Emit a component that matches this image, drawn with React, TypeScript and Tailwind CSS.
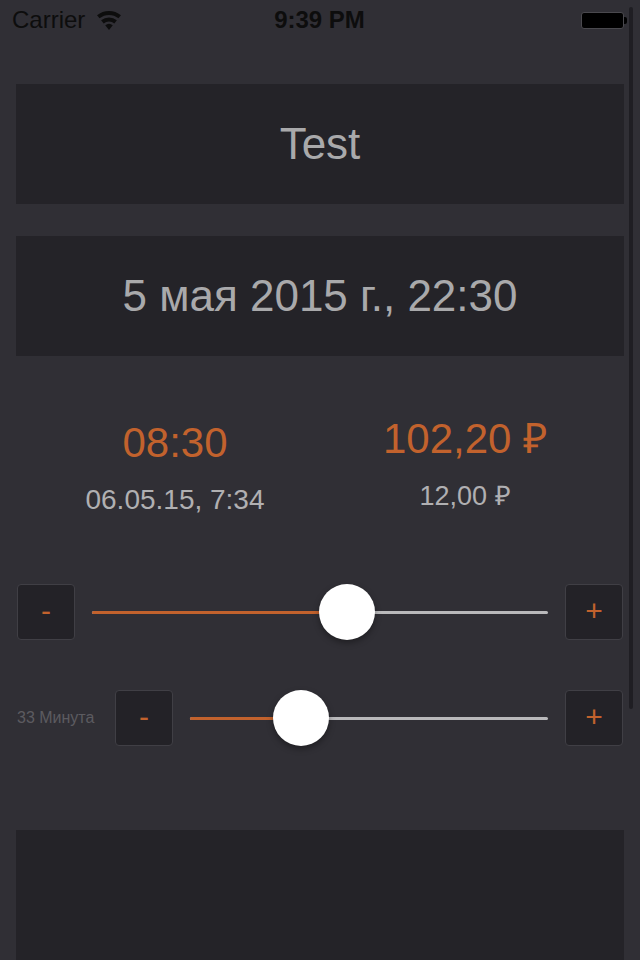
import React from "react";

const ORANGE = "#c2622d";

function StepButton({ label }: { label: string }) {
  return (
    <div className="w-[58px] h-[56px] shrink-0 rounded-[4px] bg-[#232227] border border-[#403f45] flex items-center justify-center text-[30px] leading-none text-[#c2622d]">
      <span className="-mt-[2px]">{label}</span>
    </div>
  );
}

function Track({ thumbLeft }: { thumbLeft: number }) {
  return (
    <div className="relative flex-1 h-[56px] flex items-center">
      <div className="w-full h-[3px] rounded-full bg-[#b9b9bb] relative">
        <div
          className="absolute left-0 top-0 h-[3px] rounded-full bg-[#c2622d]"
          style={{ width: thumbLeft + 28 }}
        />
      </div>
      <div
        className="absolute top-0 w-[56px] h-[56px] rounded-full bg-white shadow-[0_3px_6px_rgba(0,0,0,0.35)]"
        style={{ left: thumbLeft }}
      />
    </div>
  );
}

function Wifi() {
  return (
    <svg width="24" height="19" viewBox="0 0 24 19">
      <path d="M0.05 4.23 A19 19 0 0 1 23.95 4.23 L21.44 7.34 A15 15 0 0 0 2.56 7.34 Z" fill="#0d0d0d" />
      <path d="M4.14 9.29 A12.5 12.5 0 0 1 19.86 9.29 L17.35 12.4 A8.5 8.5 0 0 0 6.65 12.4 Z" fill="#0d0d0d" />
      <path d="M8.23 14.34 A6 6 0 0 1 15.77 14.34 L12 19 Z" fill="#0d0d0d" />
    </svg>
  );
}

export default function App() {
  return (
    <div
      className="relative w-[640px] h-[960px] overflow-hidden bg-[#302f35] flex flex-col"
      style={{ fontFamily: '"Liberation Sans", Arial, sans-serif' }}
    >
      {/* status bar */}
      <div className="h-[40px] shrink-0 relative flex items-center px-[12px] text-[#0d0d0d]">
        <div className="flex items-center gap-[12px]">
          <span className="text-[24px] leading-none">Carrier</span>
          <Wifi />
        </div>
        <div className="absolute left-0 right-0 top-0 h-[40px] flex items-center justify-center">
          <span className="text-[24px] font-bold leading-none ml-[-1px]">9:39 PM</span>
        </div>
        <div className="absolute top-[12px] left-[581px] flex items-center">
          <div className="w-[43px] h-[17px] rounded-[3px] bg-black border border-[#4a494e]" />
          <div className="w-[3px] h-[7px] rounded-r-[2px] bg-black" />
        </div>
      </div>

      {/* title panel */}
      <div className="mx-[16px] mt-[44px] h-[120px] bg-[#242328] flex items-center justify-center">
        <span className="text-[44px] leading-none text-[#a9a9ab]">Test</span>
      </div>

      {/* date panel */}
      <div className="mx-[16px] mt-[32px] h-[120px] bg-[#242328] flex items-center justify-center">
        <span className="text-[44px] leading-none text-[#a9a9ab]">5 мая 2015 г., 22:30</span>
      </div>

      {/* stats */}
      <div className="mt-[62px] h-[166px] px-[30px] grid grid-cols-2 items-start">
        <div className="flex flex-col items-center pt-[4px]">
          <span className="text-[42px] leading-[42px]" style={{ color: ORANGE }}>08:30</span>
          <span className="mt-[22px] text-[28px] leading-[28px] text-[#b0b0b2]">06.05.15, 7:34</span>
        </div>
        <div className="flex flex-col items-center">
          <span className="text-[42px] leading-[42px]" style={{ color: ORANGE }}>102,20 ₽</span>
          <span className="mt-[23px] text-[27px] leading-[27px] text-[#b0b0b2]">12,00 ₽</span>
        </div>
      </div>

      {/* slider 1 */}
      <div className="px-[17px] flex items-center gap-[17px]">
        <StepButton label="-" />
        <Track thumbLeft={227} />
        <StepButton label="+" />
      </div>

      {/* slider 2 */}
      <div className="mt-[50px] px-[17px] flex items-center">
        <div className="w-[98px] shrink-0 text-[16px] leading-none text-[#5c5b60]">33 Минута</div>
        <StepButton label="-" />
        <div className="ml-[17px] mr-[17px] flex-1 flex">
          <Track thumbLeft={83} />
        </div>
        <StepButton label="+" />
      </div>

      {/* bottom panel */}
      <div className="mx-[16px] mt-[84px] flex-1 bg-[#242328]" />

      {/* scroll indicator */}
      <div className="absolute left-[629px] top-[7px] w-[4px] h-[702px] rounded-full bg-[#1f1e23]" />
    </div>
  );
}
